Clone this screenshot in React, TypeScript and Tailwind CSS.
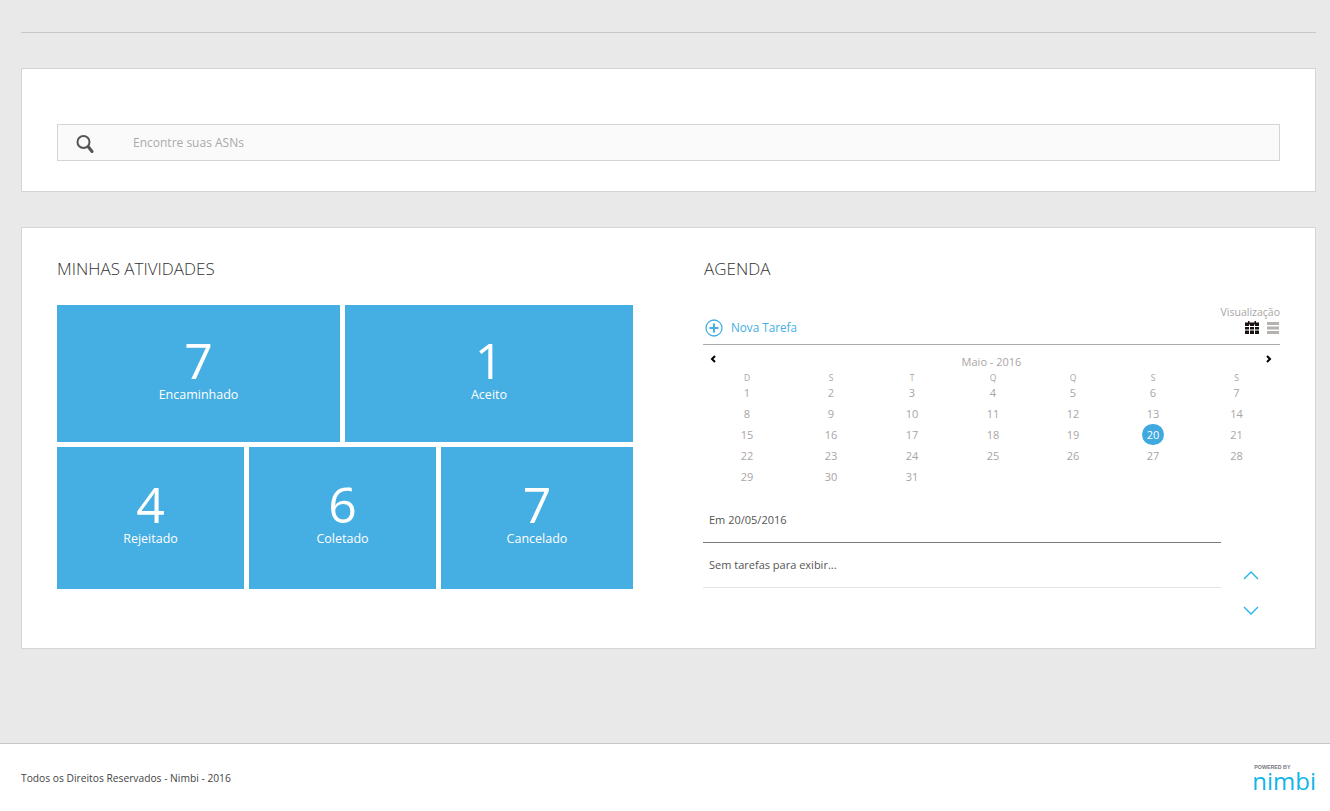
import React from "react";

const weekDays = ["D", "S", "T", "Q", "Q", "S", "S"];
const days = Array.from({ length: 31 }, (_, i) => i + 1);

function Tile(p: { value: number; label: string; className: string }) {
  return (
    <div className={`bg-[#45aee2] text-white flex flex-col items-center ${p.className}`}>
      <span className="text-[50px] leading-[50px] font-normal">{p.value}</span>
      <span className="text-[12.5px] leading-[18px] mt-[1px]">{p.label}</span>
    </div>
  );
}

function SearchIcon() {
  return (
    <svg width="18" height="20" viewBox="0 0 18 20" fill="none">
      <circle cx="7.500" cy="8" r="6" stroke="#555" strokeWidth="2" />
      <path d="M12.500 13 L16 17.500" stroke="#555" strokeWidth="3" strokeLinecap="round" />
    </svg>
  );
}

function CalendarIcon() {
  return (
    <svg width="14" height="13" viewBox="0 0 14 13">
      <path d="M0 1.500h3V0h1.500v1.500h5V0H11v1.500h3V13H0z" fill="#1a1210" />
      <path d="M0 5.500h14M0 9h14M4.500 3.500V13M9.500 3.500V13" stroke="#fff" strokeWidth="1" />
    </svg>
  );
}

function ListIcon() {
  return (
    <svg width="12" height="12" viewBox="0 0 12 12" fill="#b5b1ae">
      <rect y="0" width="12" height="3" />
      <rect y="4.500" width="12" height="3" />
      <rect y="9" width="12" height="3" />
    </svg>
  );
}

function NimbiLogo() {
  return (
    <div className="flex flex-col items-start">
      <span className="ml-[2px] text-[5.300px] leading-[6px] font-bold text-[#77777f] font-['Liberation_Sans',sans-serif]">
        POWERED BY
      </span>
      <span className="text-[24px] leading-[22px] font-medium text-[#12b5e8] font-['Open_Sans',sans-serif]">nimbi</span>
    </div>
  );
}

export default function App() {
  return (
    <div className="w-[1330px] h-[811px] bg-[#e9e9e9] flex flex-col font-['Open_Sans',sans-serif] overflow-hidden">
      <div className="mx-[21px] mt-[32px] w-[1295px] h-px bg-[#c8c8c8]" />

      <section className="mx-[21px] mt-[35px] h-[124px] w-[1295px] bg-white border border-[#d5d5d5] px-[35px] pt-[55px]">
        <div className="h-[37px] bg-[#fafafa] border border-[#d5d5d5] flex items-center">
          <div className="ml-[18px] w-[57px] mt-[3px]">
            <SearchIcon />
          </div>
          <span className="text-[12px] text-[#aaa]">Encontre suas ASNs</span>
        </div>
      </section>

      <section className="mx-[21px] mt-[35px] h-[422px] w-[1295px] bg-white border border-[#d5d5d5] flex pl-[35px] pr-[35px]">
        <div className="w-[576px]">
          <h2 className="mt-[30px] text-[17px] leading-[22px] font-light text-[#333]">MINHAS ATIVIDADES</h2>
          <div className="mt-[25px] flex gap-[5px]">
            <Tile value={7} label="Encaminhado" className="w-[283px] h-[137px] pt-[30px]" />
            <Tile value={1} label="Aceito" className="w-[288px] h-[137px] pt-[30px]" />
          </div>
          <div className="mt-[5px] flex gap-[5px]">
            <Tile value={4} label="Rejeitado" className="w-[187px] h-[142px] pt-[32px]" />
            <Tile value={6} label="Coletado" className="w-[187px] h-[142px] pt-[32px]" />
            <Tile value={7} label="Cancelado" className="w-[192px] h-[142px] pt-[32px]" />
          </div>
        </div>

        <div className="ml-[70px] w-[577px]">
          <h2 className="mt-[30px] pl-[1px] text-[17px] leading-[22px] font-light text-[#333]">AGENDA</h2>

          <div className="mt-[25px] h-[40px] flex justify-between border-b border-[#aaa]">
            <div className="flex items-center mt-[8px] h-[29px]">
              <svg width="18" height="18" viewBox="0 0 18 18" fill="none" className="ml-[2px]">
                <circle cx="9" cy="9" r="8" stroke="#45aee2" strokeWidth="1.300" />
                <path d="M9 4.500v9M4.500 9h9" stroke="#45aee2" strokeWidth="2" />
              </svg>
              <span className="ml-[8px] text-[11.700px] text-[#45aee2]">Nova Tarefa</span>
            </div>
            <div className="flex flex-col items-end">
              <span className="text-[10.500px] leading-[14px] text-[#a9a5a5]">Visualização</span>
              <div className="flex items-center gap-[8px] mt-[2px] mr-[1px]">
                <CalendarIcon />
                <ListIcon />
              </div>
            </div>
          </div>

          <div className="relative h-[21px] flex justify-center">
            <span className="mt-[9px] text-[11px] leading-[15px] text-[#a9a5a5]">Maio - 2016</span>
            <svg width="6" height="8" viewBox="0 0 6 8" className="absolute left-[7px] top-[10px]">
              <path d="M5 1L2 4l3 3" fill="none" stroke="#000" strokeWidth="2" />
            </svg>
            <svg width="6" height="8" viewBox="0 0 6 8" className="absolute right-[8px] top-[10px]">
              <path d="M1 1l3 3-3 3" fill="none" stroke="#000" strokeWidth="2" />
            </svg>
          </div>

          <div className="grid grid-cols-[88px_80px_82px_80px_80px_80px_87px] text-center text-[#a9a5a5]">
            {weekDays.map((d, i) => (
              <span key={i} className="text-[8.500px] leading-[10px] mt-[7px]">
                {d}
              </span>
            ))}
          </div>
          <div className="mt-[-1px] grid grid-cols-[88px_80px_82px_80px_80px_80px_87px] auto-rows-[21px] text-center text-[11px] text-[#a9a5a5]">
            {days.map((d) =>
              d === 20 ? (
                <div key={d} className="flex items-center justify-center">
                  <span className="w-[22px] h-[21px] rounded-full bg-[#3fa9e0] text-white leading-[21px]">{d}</span>
                </div>
              ) : (
                <span key={d} className="leading-[21px]">
                  {d}
                </span>
              )
            )}
          </div>

          <div className="flex">
            <div className="w-[518px]">
              <div className="mt-[23px] h-[33px] border-b border-[#7a7a7a] pl-[6px] text-[11px] leading-[20px] text-[#555]">
                Em 20/05/2016
              </div>
              <div className="h-[45px] border-b border-[#e3e3e3] pl-[6px] pt-[12px] text-[11px] leading-[20px] text-[#555]">
                Sem tarefas para exibir...
              </div>
            </div>
            <div className="ml-[22px] w-[16px] flex flex-col items-center pt-[84px] gap-[26px]">
              <svg width="16" height="9" viewBox="0 0 16 9" fill="none">
                <path d="M1 8l7-7 7 7" stroke="#1db4e6" strokeWidth="1.300" />
              </svg>
              <svg width="16" height="9" viewBox="0 0 16 9" fill="none">
                <path d="M1 1l7 7 7-7" stroke="#1db4e6" strokeWidth="1.300" />
              </svg>
            </div>
          </div>
        </div>
      </section>

      <footer className="mt-[94px] h-[68px] bg-white border-t border-[#c8c8c8] flex justify-between pl-[21px] pr-[14px]">
        <span className="mt-[26px] text-[10.250px] leading-[16px] text-[#444]">
          Todos os Direitos Reservados - Nimbi - 2016
        </span>
        <div className="mt-[20px]">
          <NimbiLogo />
        </div>
      </footer>
    </div>
  );
}
